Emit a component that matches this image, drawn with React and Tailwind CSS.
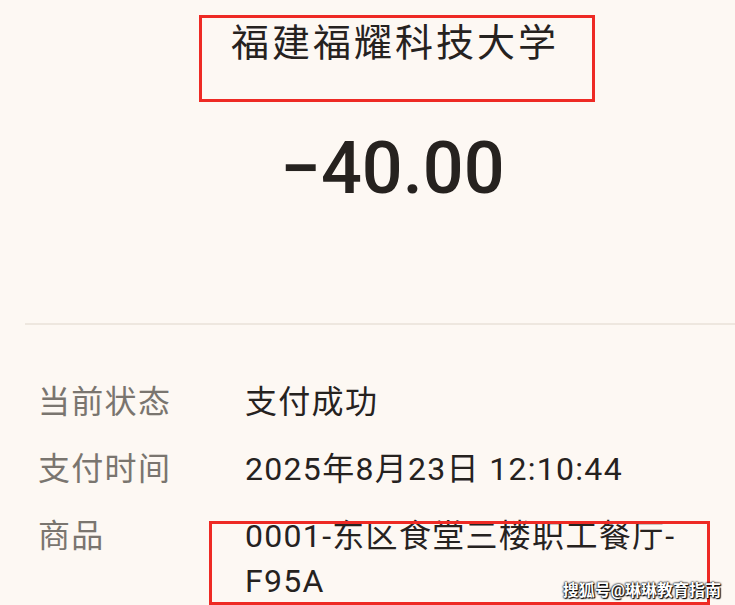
export default function App() {
  const rows = [
    { label: "当前状态", value: "支付成功" },
    { label: "支付时间", value: "2025年8月23日 12:10:44" },
    { label: "商品", value: "0001-东区食堂三楼职工餐厅-F95A", boxed: true },
  ];

  return (
    <div
      className="relative w-[735px] h-[605px] overflow-hidden bg-[#fdf8f3] text-[#26221f]"
      style={{ fontFamily: "Roboto, 'Noto Sans CJK SC', sans-serif" }}
    >
      {/* title, boxed in red */}
      <div className="ml-[199px] mt-[15px] w-[396px] h-[87px] border-[3px] border-[#ee2a24]">
        <div className="pl-[29px] pt-[6px] text-[38px] leading-none tracking-[3px]">福建福耀科技大学</div>
      </div>

      {/* amount */}
      <div className="mt-[31px] pl-[50px] text-center text-[72px] leading-none font-medium">−40.00</div>

      {/* divider */}
      <div className="ml-[25px] mt-[118px] h-[2px] bg-[#eee7df]" />

      {/* details */}
      <div className="mt-[55px] pl-[38px] flex flex-col gap-[22px] tracking-[1.3px]">
        {rows.map((r) => (
          <div key={r.label} className="flex text-[32px] leading-[45px]">
            <div className="w-[207px] shrink-0 text-[#7a756f]">{r.label}</div>
            <div className="relative w-[460px]">
              {r.value}
              {r.boxed && (
                <span className="absolute left-[-36px] top-[7px] w-[501px] h-[84px] border-[3px] border-[#ee2a24]" />
              )}
            </div>
          </div>
        ))}
      </div>

      {/* watermark */}
      <div
        className="absolute right-[14px] bottom-[6px] text-[16px] font-bold text-white leading-none"
        style={{ textShadow: "0 0 2px #000, 0 0 2px #000, 1px 1px 1px #000" }}
      >
        搜狐号@琳琳教育指南
      </div>
    </div>
  );
}
